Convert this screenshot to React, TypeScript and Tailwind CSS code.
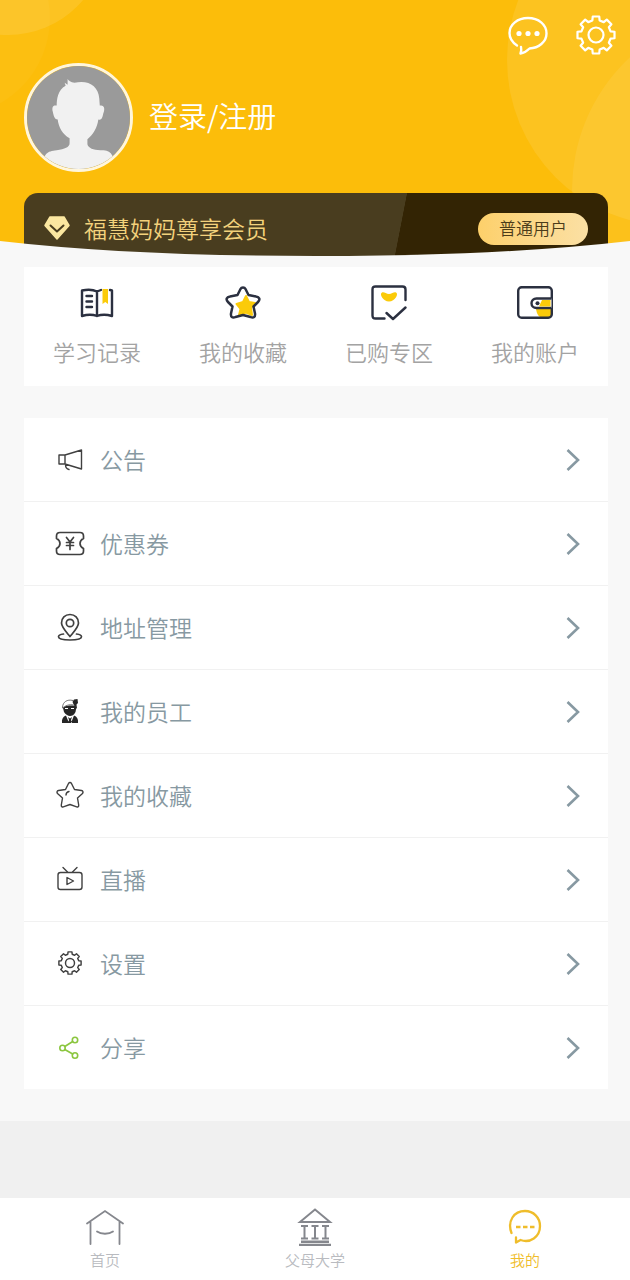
import React from 'react';

interface IconProps {
  className?: string;
}

const polar = (radius: number, degrees: number) => {
  const angle = (degrees * Math.PI) / 180;
  return `${(20 + radius * Math.cos(angle)).toFixed(2)} ${(20 + radius * Math.sin(angle)).toFixed(2)}`;
};

const gearPath =
  Array.from({ length: 8 }, (_, i) => {
    const a = i * 45;
    return `${i === 0 ? 'M' : 'L'}${polar(15, a - 14)} L${polar(18.8, a - 10)} L${polar(18.8, a + 10)} L${polar(15, a + 14)}`;
  }).join(' ') + 'Z';

const GearIcon: React.FC<IconProps & { strokeWidth?: number }> = ({ className, strokeWidth = 2.2 }) => (
  <svg viewBox="0 0 40 40" fill="none" stroke="currentColor" strokeWidth={strokeWidth} strokeLinejoin="round" className={className}>
    <path d={gearPath} />
    <circle cx="20" cy="20" r="7.5" />
  </svg>
);

const MessageIcon: React.FC<IconProps> = ({ className }) => (
  <svg viewBox="0 0 40 40" fill="none" stroke="currentColor" strokeWidth="2.4" strokeLinecap="round" strokeLinejoin="round" className={className}>
    <path d="M9 30.500C4.500 27.500 1.500 23 1.500 18C1.500 9.500 9.500 3 20 3S38.500 9.500 38.500 18.500C38.500 27 30.500 33 21.500 33.500C19 36 16 38 12.500 38.500C13.300 36.500 13.500 34 13 32" />
    <g fill="currentColor" stroke="none">
      <circle cx="11" cy="18.500" r="2.600" />
      <circle cx="20" cy="18.500" r="2.600" />
      <circle cx="29" cy="18.500" r="2.600" />
    </g>
  </svg>
);

const Avatar: React.FC<IconProps> = ({ className }) => (
  <svg viewBox="0 0 104 104" className={className}>
    <path fill="#9a9a9a" d="M0 0H104V104H0Z" />
    <path
      fill="#f1f1f1"
      d="M41 13C42 15 44 16 48 17C62 14 72 20 73 33L73.500 40C78 39 79 43 77 48C76 53 75 55 72 54C71 62 67 69 61 74V79C62 83 67 85 74 85C84 85 87 87 90 104H14C17 88 20 86 30 85C38 84 43 82 43 78V73C36 69 32 62 31 54C28 54 27 51 26 46C25 42 26 39 30 40C30 34 31 24 39 20L38 17L41 19Z"
    />
  </svg>
);

const GemIcon: React.FC<IconProps> = ({ className }) => (
  <svg viewBox="0 0 26 26" className={className}>
    <path fill="#fbe7a0" stroke="#fbe7a0" strokeWidth="1.500" strokeLinejoin="round" d="M6 2H20L25 10.500L13 24L1 10.500Z" />
    <path fill="none" stroke="#493d1f" strokeWidth="2" strokeLinecap="round" strokeLinejoin="round" d="M6.500 10.500L13 16.500L19.500 10.500" />
  </svg>
);

const BookIcon: React.FC<IconProps> = ({ className }) => (
  <svg viewBox="0 0 36 36" fill="none" stroke="#2b3040" strokeWidth="2.400" strokeLinecap="round" strokeLinejoin="round" className={className}>
    <path d="M18 6.500C14 4.500 8 4.500 3 5.500V31C8 29.500 14 29.500 18 31C22 29.500 28 29.500 33 31V5.500L31 5M18 6.500V31M18 6.500L22 5" />
    <path d="M7.500 11H13M7.500 16.500H13M7.500 22H13" />
    <path fill="#fbcb0a" stroke="none" d="M23.500 4H29V19L26.300 17L23.500 19Z" />
  </svg>
);

const FavoriteIcon: React.FC<IconProps> = ({ className }) => (
  <svg viewBox="0 0 36 36" strokeLinejoin="round" className={className}>
    <path fill="#fbcb0a" stroke="#fbcb0a" strokeWidth="2" d="M21 11L24 17L30 18L26 23L27 30L21 27.500L14 30L15.500 24L11.500 19L18 17Z" />
    <path
      fill="none"
      stroke="#2b3040"
      strokeWidth="2.500"
      d="M15.500 4C16.500 2 19.500 2 20.500 4L23.500 10L31 11.500C34.500 12 35.500 14.500 33 17L28.500 21.500L30 28.500C30.500 32 28.500 33.500 25.500 32L18 30L10.500 32C7.500 33.500 5.500 32 6 28.500L7.500 21.500L3 17C.5 14.500 1.500 12 5 11.500L12.500 10Z"
    />
  </svg>
);

const PurchasedIcon: React.FC<IconProps> = ({ className }) => (
  <svg viewBox="0 0 36 36" fill="none" stroke="#2b3040" strokeWidth="2.400" strokeLinecap="round" strokeLinejoin="round" className={className}>
    <path fill="#fbcb0a" stroke="none" d="M11 7.500C13 6.500 15 9 18 9S23 6.500 25 7.500C28 9 24 16.500 18 16.500S8 9 11 7.500Z" />
    <path d="M13.500 33.500H4.500C2.500 33.500 1.500 32.500 1.500 30.500V4.500C1.500 2.500 2.500 1.500 4.500 1.500H31.500C33.500 1.500 34.500 2.500 34.500 4.500V15" />
    <path d="M15.500 28L22 34L34.500 22.500" />
  </svg>
);

const WalletIcon: React.FC<IconProps> = ({ className }) => (
  <svg viewBox="0 0 36 36" fill="none" stroke="#2b3040" strokeWidth="2.400" className={className}>
    <path fill="#fbcb0a" stroke="none" d="M19 22C18 18 22 15 28 15H34V32H23C20 30 19 26 19 22Z" />
    <rect x="1.200" y="2.200" width="33.600" height="30.600" rx="3.500" />
    <path fill="#fff" d="M34.500 13.500H19.500C16.500 13.500 14.500 15.500 14.500 18.300S16.500 23 19.500 23H34.500" />
    <path fill="#fbcb0a" stroke="none" d="M25 15H33.500V21.500H22Z" />
    <circle cx="20.500" cy="18.300" r="2" fill="#2b3040" stroke="none" />
  </svg>
);

const lineProps = {
  viewBox: '0 0 30 30',
  fill: 'none',
  stroke: 'currentColor',
  strokeWidth: 1.4,
  strokeLinecap: 'round',
  strokeLinejoin: 'round',
} as const;

const HornIcon: React.FC<IconProps> = ({ className }) => (
  <svg {...lineProps} className={className}>
    <path d="M4 10H10V19H4ZM10 10L26.500 5V24L10 19M10.500 19.500C10.500 22.500 11.500 24 14 24.500" />
  </svg>
);

const CouponIcon: React.FC<IconProps> = ({ className }) => (
  <svg {...lineProps} className={className}>
    <path strokeWidth="1.700" d="M5 3.500H25C27 3.500 28.500 5 28.500 7V9.500C26.500 10.500 25 12 25 14.500S26.500 18.500 28.500 19.500V22C28.500 24 27 25.500 25 25.500H5C3 25.500 1.500 24 1.500 22V19.500C3.500 18.500 5 17 5 14.500S3.500 10.500 1.500 9.500V7C1.500 5 3 3.500 5 3.500Z" />
    <path strokeWidth="1.700" d="M11.500 8.500L15 13L18.500 8.500M11.500 13.500H18.500M11.500 16.500H18.500M15 13V20.500" />
  </svg>
);

const AddressIcon: React.FC<IconProps> = ({ className }) => (
  <svg {...lineProps} strokeWidth="1.700" className={className}>
    <path d="M15 23.500C10 17.500 6.500 14 6.500 10C6.500 5 10 1.500 15 1.500S23.500 5 23.500 10C23.500 14 20 17.500 15 23.500Z" />
    <circle cx="15" cy="10" r="3.700" />
    <path d="M8.500 21C5 21.500 3.500 22.500 3.500 23.800C3.500 25.800 8.500 27 15 27S26.500 25.800 26.500 23.800C26.500 22.500 25 21.500 21.500 21" />
  </svg>
);

const StaffIcon: React.FC<IconProps> = ({ className }) => (
  <svg viewBox="0 0 30 30" fill="#262626" className={className}>
    <path d="M8 11C9 8 20 8 21.500 10L20.500 15C19 18 17 19 15 19S10 17 9 15Z" />
    <path fill="#fff" stroke="#555" strokeWidth=".8" d="M7.500 10C8 5 12 2 18 3.500L20 8.500C16 7 12 7.500 7.500 11Z" />
    <path d="M17.500 5L19 2.500L22.500 2L23 6L21.500 7.500L22 12L19 8Z" />
    <path d="M7 26C6.500 22 8 19.500 11 18.500L14 26ZM23 26C23.500 22 22 19.500 19 18.500L16 26ZM13 20L15 21.500L17 20L16 23L17 26H13L14 23Z" />
    <path fill="#fff" d="M10 11H13V12H10ZM16 11H19V12H16Z" />
  </svg>
);

const StarIcon: React.FC<IconProps> = ({ className }) => (
  <svg {...lineProps} className={className}>
    <path d="M13.500 2.500C14.200 1.200 15.800 1.200 16.500 2.500L19.500 8.500L26.500 9.500C28 9.800 28.500 11.200 27.500 12.500L22.500 17L23.700 24C24 25.700 22.500 26.500 21 25.700L15 23.500L9 25.700C7.500 26.500 6 25.700 6.300 24L7.500 17L2.500 12.500C1.500 11.200 2 9.800 3.500 9.500L10.500 8.500Z" />
    <path d="M11 14C11 12 12 11 14 10.500" />
  </svg>
);

const LiveIcon: React.FC<IconProps> = ({ className }) => (
  <svg {...lineProps} className={className}>
    <rect x="3" y="7.500" width="24" height="17" rx="2.500" />
    <path d="M8 2.500L12.500 7M22 2.500L17.500 7M12 12.500V19.500L18.500 16Z" />
  </svg>
);

const SettingIcon: React.FC<IconProps> = ({ className }) => (
  <span className={`flex items-center justify-center pb-0.5 ${className}`}>
    <GearIcon strokeWidth={2.4} className="size-6" />
  </span>
);

const ShareIcon: React.FC<IconProps> = ({ className }) => (
  <svg {...lineProps} stroke="#8bc63f" strokeWidth="1.600" className={className}>
    <circle cx="7.500" cy="15" r="2.700" />
    <circle cx="20" cy="7" r="2.700" />
    <circle cx="20" cy="22.500" r="2.700" />
    <path d="M9.800 13.500L17.700 8.500M9.800 16.500L17.700 21" />
  </svg>
);

const ChevronIcon: React.FC<IconProps> = ({ className }) => (
  <svg viewBox="0 0 14 22" fill="none" stroke="currentColor" strokeWidth="2.600" className={className}>
    <path d="M1.500 1L12 11L1.500 21" />
  </svg>
);

const HomeTabIcon: React.FC<IconProps> = ({ className }) => (
  <svg viewBox="0 0 40 40" fill="none" stroke="currentColor" strokeWidth="1.800" strokeLinecap="round" className={className}>
    <path d="M2 17.500L20 5L38 17.500M5.500 16V38M34.500 16V38M12 25.500C16 28.500 24 28.500 28 25.500" />
  </svg>
);

const CollegeTabIcon: React.FC<IconProps> = ({ className }) => (
  <svg viewBox="0 0 40 40" fill="none" stroke="currentColor" strokeWidth="2" className={className}>
    <path d="M5 16L20 3.500L35 16Z" />
    <path d="M6 20H13M16.500 20H23.500M27 20H34M6 32.500H13M16.500 32.500H23.500M27 32.500H34M9.500 20V32M20 20V32M30.500 20V32" />
    <path strokeWidth="2.400" d="M6 35.700H34M4 39H36" />
  </svg>
);

const MineTabIcon: React.FC<IconProps> = ({ className }) => (
  <svg viewBox="0 0 40 40" fill="none" stroke="currentColor" strokeWidth="2.300" strokeLinecap="round" strokeLinejoin="round" className={className}>
    <path d="M6.500 27C2 15 9 5 20 5C28.500 5 35 11.500 35 20C35 31 25 37.500 15.500 34L11 36.500V31.500" />
    <path strokeLinecap="butt" d="M11 21H15.500M18 21H22.500M25 21H29.500" />
  </svg>
);

const shortcuts = [
  { label: '学习记录', icon: BookIcon },
  { label: '我的收藏', icon: FavoriteIcon },
  { label: '已购专区', icon: PurchasedIcon },
  { label: '我的账户', icon: WalletIcon },
];

const menuItems = [
  { label: '公告', icon: HornIcon },
  { label: '优惠券', icon: CouponIcon },
  { label: '地址管理', icon: AddressIcon },
  { label: '我的员工', icon: StaffIcon },
  { label: '我的收藏', icon: StarIcon },
  { label: '直播', icon: LiveIcon },
  { label: '设置', icon: SettingIcon },
  { label: '分享', icon: ShareIcon },
];

const tabs = [
  { label: '首页', icon: HomeTabIcon, active: false },
  { label: '父母大学', icon: CollegeTabIcon, active: false },
  { label: '我的', icon: MineTabIcon, active: true },
];

const Header: React.FC = () => (
  <header className="relative overflow-hidden bg-[#fcbd0a]">
    <svg viewBox="0 0 120 120" className="absolute left-0 top-0 size-[120px]" fill="#fff">
      <circle cx="-48" cy="18" r="98" fillOpacity=".03" />
      <circle cx="8" cy="-63" r="98" fillOpacity=".1" />
    </svg>
    <svg viewBox="0 0 130 260" className="absolute right-0 top-0 h-[260px] w-[130px]" fill="#fff">
      <circle cx="173" cy="60" r="166" fillOpacity=".09" />
      <circle cx="253" cy="190" r="181" fillOpacity=".07" />
    </svg>

    <div className="relative flex justify-end gap-7 pr-3.5 pt-[15px]">
      <button type="button" aria-label="消息" className="text-white">
        <MessageIcon className="size-10" />
      </button>
      <button type="button" aria-label="设置" className="text-white">
        <GearIcon className="size-10" />
      </button>
    </div>

    <div className="relative mt-2 flex items-center gap-4 px-6">
      <Avatar className="size-[109px] rounded-full border-3 border-[#fff6dc]" />
      <a href="#login" className="pb-1.5 text-[29px] leading-10 text-white">
        登录/注册
      </a>
    </div>

    <section className="relative ml-6 mr-[22px] mt-[21px] flex h-[63px] items-start justify-between rounded-t-[14px] bg-[linear-gradient(101deg,#493d1f_64.2%,#332404_64.3%)] px-5 pt-5">
      <div className="flex items-center gap-3.5">
        <GemIcon className="size-[26px]" />
        <h1 className="text-[23px] leading-[30px] text-[#f3d27c]">福慧妈妈尊享会员</h1>
      </div>
      <button type="button" className="h-8 rounded-full bg-linear-to-r from-[#fdd06a] to-[#fbe0a4] px-[21px] text-[17px] leading-[30px] text-[#4b3c1a]">
        <span className="block h-8">普通用户</span>
      </button>
    </section>

    <svg viewBox="0 0 630 16" preserveAspectRatio="none" className="absolute inset-x-0 bottom-0 h-4 w-full">
      <path fill="#f8f8f8" d="M0 1Q130 16 315 16T630 1V16H0Z" />
    </svg>
  </header>
);

const Shortcuts: React.FC = () => (
  <nav className="grid grid-cols-4 bg-white pb-[19px] pt-[18px]">
    {shortcuts.map(({ label, icon: Icon }) => (
      <a key={label} href="#shortcut" className="flex flex-col items-center gap-3.5 text-[22px] text-[#a3a3a3]">
        <Icon className="size-9" />
        <span className="leading-8">{label}</span>
      </a>
    ))}
  </nav>
);

const Menu: React.FC = () => (
  <ul className="mt-8 divide-y divide-[#f1f1f1] bg-white">
    {menuItems.map(({ label, icon: Icon }) => (
      <li key={label}>
        <a href="#menu" className="flex h-[83px] items-center gap-[15px] pl-[31px] pr-7 text-[23px] text-[#8799a2]">
          <Icon className="size-[30px] text-[#404040]" />
          <span className="flex-1">{label}</span>
          <ChevronIcon className="h-[22px] w-3.5" />
        </a>
      </li>
    ))}
  </ul>
);

const TabBar: React.FC = () => (
  <nav className="grid h-[82px] grid-cols-3 bg-white pt-2">
    {tabs.map(({ label, icon: Icon, active }) => (
      <a
        key={label}
        href="#tab"
        className={`flex flex-col items-center text-[15px] ${active ? 'text-[#efbd2b]' : 'text-[#b9bbc0]'}`}
      >
        <Icon className={`size-10 ${active ? '' : 'text-[#85878d]'}`} />
        <span className="mt-1 leading-5">{label}</span>
      </a>
    ))}
  </nav>
);

export default function App() {
  return (
    <div className="flex min-h-screen flex-col bg-[#f0f0f0] font-['Noto_Sans_CJK_SC',sans-serif] font-[350]">
      <Header />
      <main className="bg-[#f8f8f8] pb-8 pl-6 pr-[22px] pt-[11px]">
        <Shortcuts />
        <Menu />
      </main>
      <div className="flex-1" />
      <TabBar />
    </div>
  );
}
